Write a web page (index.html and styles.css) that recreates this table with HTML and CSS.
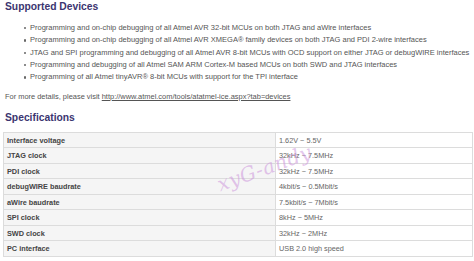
FILE: index.html
```html
<!DOCTYPE html>
<html>
<head>
<meta charset="utf-8">
<link rel="stylesheet" href="styles.css">
</head>
<body>
<div class="page">
  <h2 class="heading">Supported Devices</h2>
  <ul class="devices">
    <li>Programming and on-chip debugging of all Atmel AVR 32-bit MCUs on both JTAG and aWire interfaces</li>
    <li>Programming and on-chip debugging of all Atmel AVR XMEGA® family devices on both JTAG and PDI 2-wire interfaces</li>
    <li>JTAG and SPI programming and debugging of all Atmel AVR 8-bit MCUs with OCD support on either JTAG or debugWIRE interfaces</li>
    <li>Programming and debugging of all Atmel SAM ARM Cortex-M based MCUs on both SWD and JTAG interfaces</li>
    <li>Programming of all Atmel tinyAVR® 8-bit MCUs with support for the TPI interface</li>
  </ul>
  <p class="more">For more details, please visit <a href="#">http://www.atmel.com/tools/atatmel-ice.aspx?tab=devices</a></p>
  <h2 class="heading spec">Specifications</h2>
  <div class="table-wrap">
    <table class="specs">
      <tr><th>Interface voltage</th><td>1.62V ~ 5.5V</td></tr>
      <tr><th>JTAG clock</th><td>32kHz ~ 7.5MHz</td></tr>
      <tr><th>PDI clock</th><td>32kHz ~ 7.5MHz</td></tr>
      <tr><th>debugWIRE baudrate</th><td>4kbit/s ~ 0.5Mbit/s</td></tr>
      <tr><th>aWire baudrate</th><td>7.5kbit/s ~ 7Mbit/s</td></tr>
      <tr><th>SPI clock</th><td>8kHz ~ 5MHz</td></tr>
      <tr><th>SWD clock</th><td>32kHz ~ 2MHz</td></tr>
      <tr><th>PC interface</th><td>USB 2.0 high speed</td></tr>
    </table>
    <span class="watermark">xyG-andy</span>
  </div>
</div>
</body>
</html>
```
FILE: styles.css
```css
html, body {
  margin: 0;
  padding: 0;
  background: #ffffff;
}
body {
  font-family: "Liberation Sans", Arial, sans-serif;
  color: #555555;
}
.page {
  padding: 0 1px 0 3px;
}
.heading {
  margin: 0;
  padding-left: 2px;
  font-size: 10.3px;
  line-height: 14px;
  font-weight: bold;
  color: #3b3570;
}
.devices {
  margin: 8px 0 0 0;
  padding-left: 27px;
  font-size: 7.5px;
  line-height: 12.3px;
  list-style: none;
  white-space: nowrap;
}
.devices li {
  position: relative;
}
.devices li::before {
  content: "";
  position: absolute;
  left: -6px;
  top: 5px;
  width: 2.4px;
  height: 2.4px;
  border-radius: 50%;
  background: #666666;
}
.more {
  margin: 7.5px 0 0 0;
  padding-left: 2px;
  font-size: 7.45px;
  line-height: 12px;
}
.more a {
  color: #555555;
  text-decoration: underline;
}
.spec {
  margin-top: 8px;
}
.table-wrap {
  position: relative;
  margin-top: 7px;
}
.specs {
  width: 470px;
  border-collapse: collapse;
  font-size: 7.3px;
}
.specs th, .specs td {
  border: 1px solid #dcdcdc;
  height: 14.5px;
  padding: 0 3px;
  text-align: left;
  vertical-align: middle;
}
.specs th {
  width: 265px;
  font-weight: bold;
  color: #444444;
  background: #f5f5f5;
}
.specs td {
  color: #666666;
  background: #ffffff;
}
.watermark {
  position: absolute;
  left: 212px;
  top: 24px;
  font-family: "DejaVu Serif", serif;
  font-style: italic;
  font-size: 20px;
  color: rgba(205, 150, 220, 0.55);
  transform: rotate(-20deg);
  letter-spacing: 0.5px;
  pointer-events: none;
}
```
